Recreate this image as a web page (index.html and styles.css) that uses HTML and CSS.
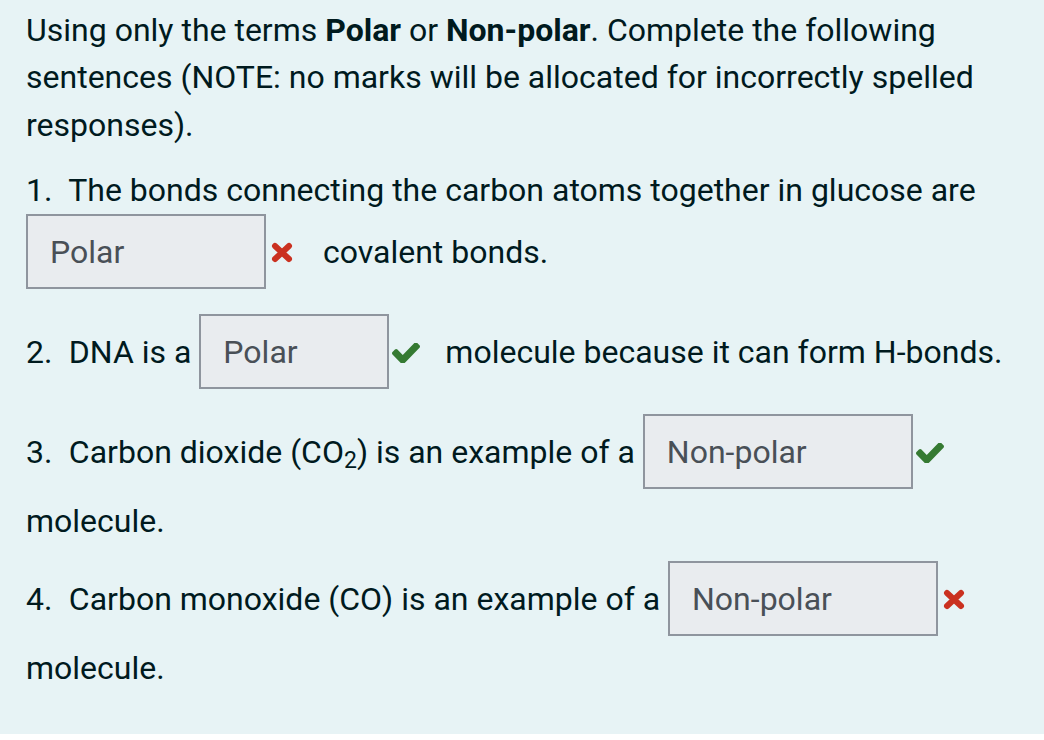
FILE: index.html
```html
<!DOCTYPE html>
<html lang="en">
<head>
<meta charset="utf-8">
<title>Polar or Non-polar</title>
<link rel="stylesheet" href="styles.css">
</head>
<body>
<div class="formulation">
  <p class="intro">Using only the terms <strong>Polar</strong> or <strong>Non-polar</strong>. Complete the following sentences (NOTE: no marks will be allocated for incorrectly spelled responses).</p>

  <p class="item"><span class="num">1.</span> The bonds connecting the carbon atoms together in glucose are <span class="answer w240">Polar</span><svg class="icon x" width="22" height="21" viewBox="0 0 22 21" aria-label="Incorrect"><path d="M4 4 L18 17 M18 4 L4 17" stroke="#ca3120" stroke-width="6" stroke-linecap="round" fill="none"/></svg><span class="after">covalent bonds.</span></p>

  <p class="item"><span class="num">2.</span> DNA is a <span class="answer w190">Polar</span><svg class="icon check" width="28" height="20" viewBox="121 374 1550 1080" preserveAspectRatio="none" aria-label="Correct"><path fill="#357a32" d="M1671 566q0 40-28 68l-724 724-136 136q-28 28-68 28t-68-28l-136-136-362-362q-28-28-28-68t28-68l136-136q28-28 68-28t68 28l294 295 656-657q28-28 68-28t68 28l136 136q28 28 28 68z"/></svg><span class="after">molecule because it can form H-bonds.</span></p>

  <p class="item"><span class="num">3.</span> Carbon dioxide (CO<sub>2</sub>) is an example of a <span class="answer w270">Non-polar</span><svg class="icon check" width="28" height="20" viewBox="121 374 1550 1080" preserveAspectRatio="none" aria-label="Correct"><path fill="#357a32" d="M1671 566q0 40-28 68l-724 724-136 136q-28 28-68 28t-68-28l-136-136-362-362q-28-28-28-68t28-68l136-136q28-28 68-28t68 28l294 295 656-657q28-28 68-28t68 28l136 136q28 28 28 68z"/></svg><span class="after">molecule.</span></p>

  <p class="item last"><span class="num">4.</span> Carbon monoxide (CO) is an example of a <span class="answer w270">Non-polar</span><svg class="icon x" width="22" height="21" viewBox="0 0 22 21" aria-label="Incorrect"><path d="M4 4 L18 17 M18 4 L4 17" stroke="#ca3120" stroke-width="6" stroke-linecap="round" fill="none"/></svg><span class="after">molecule.</span></p>
</div>
</body>
</html>
```
FILE: styles.css
```css
html, body {
  margin: 0;
  padding: 0;
  background: #ffffff;
}

.formulation {
  background: #e7f3f5;
  color: #001a1e;
  font-family: Roboto, "Liberation Sans", sans-serif;
  font-size: 32px;
  line-height: 47.25px;
  padding: 7px 15px 41px 26px;
}

.formulation p {
  margin: 0;
}

.intro {
  margin-bottom: 18px !important;
}

.item {
  margin-bottom: 16px !important;
}

.item.last {
  margin-bottom: 0 !important;
}

strong {
  font-weight: 700;
}

.num {
  margin-right: 8.5px;
}

sub {
  font-size: 72%;
  line-height: 0;
  vertical-align: -0.22em;
}

.answer {
  display: inline-block;
  box-sizing: border-box;
  height: 75px;
  padding: 12.5px 22px 0;
  margin-bottom: 9px;
  background: #e9ecef;
  border: 2px solid #8f959e;
  color: #495057;
  white-space: nowrap;
  vertical-align: baseline;
}

.w240 { width: 240px; }
.w190 { width: 190px; }
.w270 { width: 270px; }

.icon {
  vertical-align: baseline;
}

.icon.x {
  margin-left: 5px;
  margin-right: 30px;
}

.icon.check {
  margin-left: 3px;
  margin-right: 25px;
}
```
